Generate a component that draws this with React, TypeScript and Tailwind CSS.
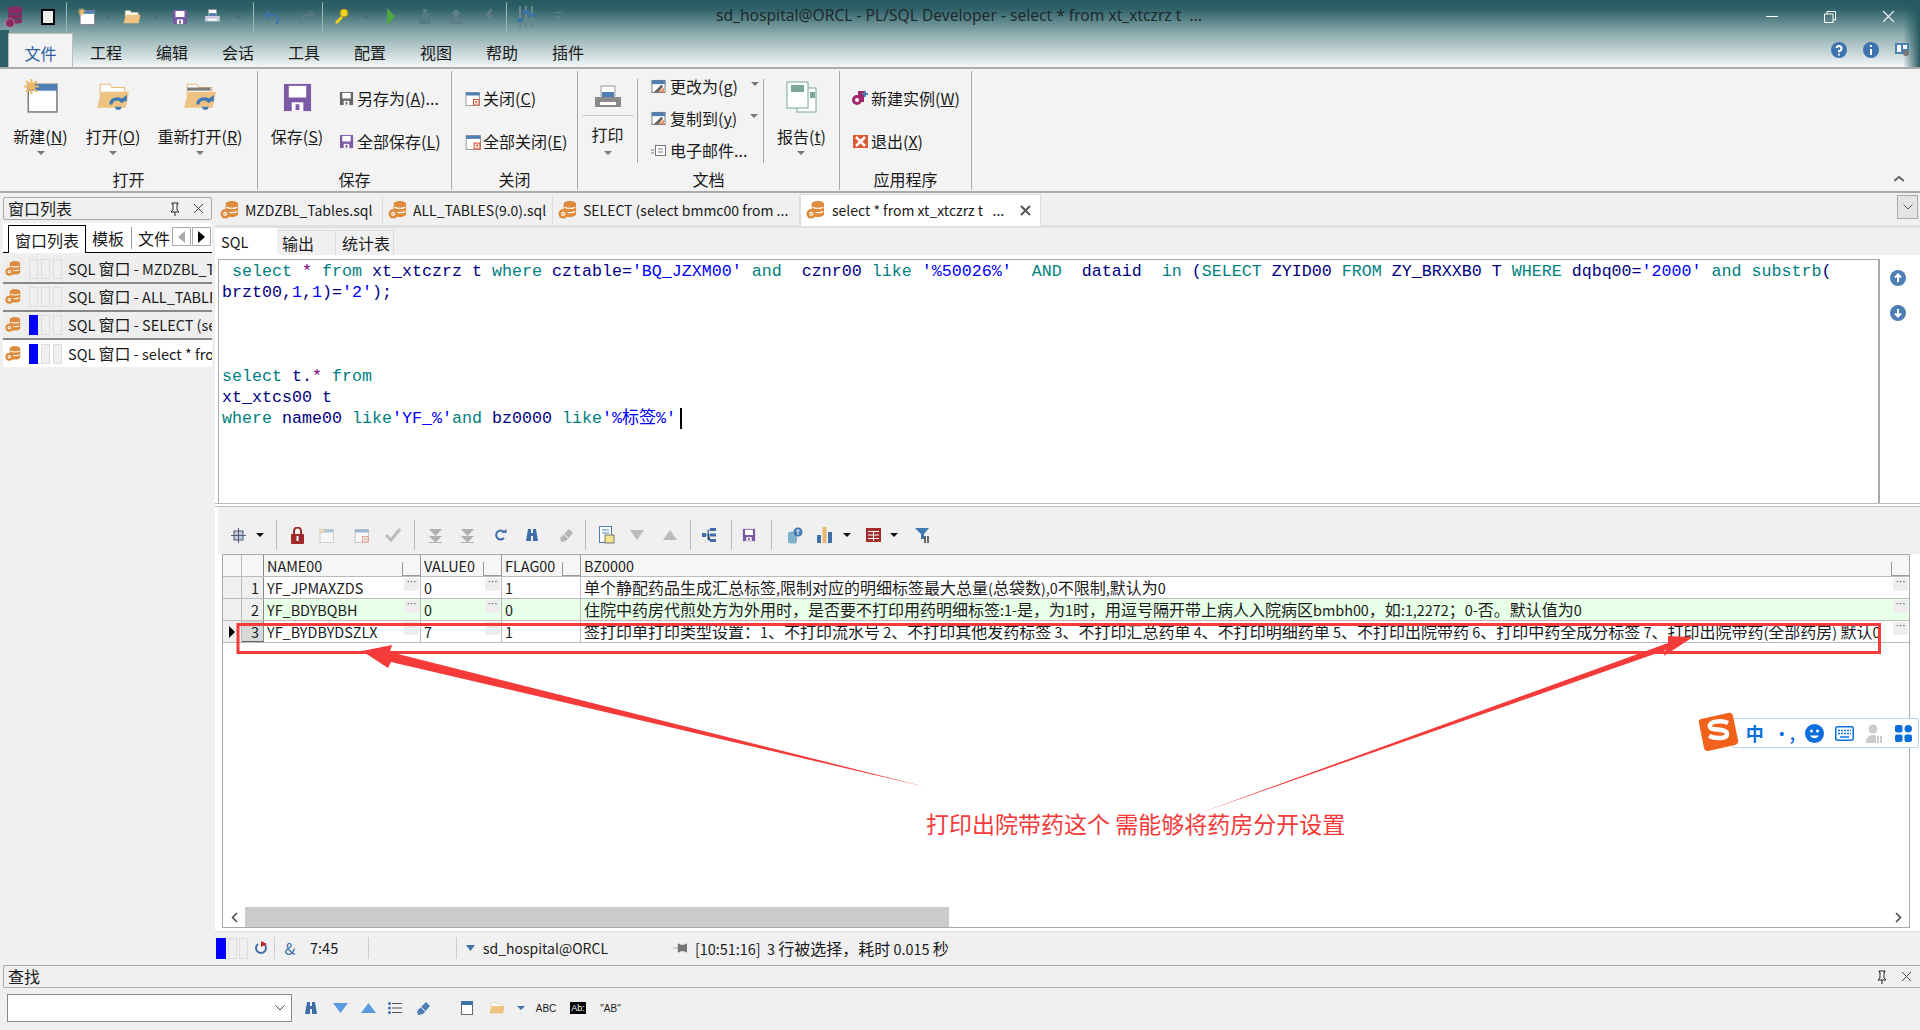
import React from "react";

const Mix = ({ t, s = "text-[14px]" }: { t: string; s?: string }) => (
  <>
    {t.split(/([\x20-\x7e]+)/).map((p, i) =>
      i % 2 === 1 ? <span key={i} className={s}>{p}</span> : <React.Fragment key={i}>{p}</React.Fragment>
    )}
  </>
);

const Db = ({ s = 18 }: { s?: number }) => (
  <svg width={s} height={s} viewBox="0 0 20 20" className="shrink-0">
    <path d="M6 3c0-1.600 3-3 6.500-3S19 1.400 19 3v11c0 1.600-3 3-6.500 3S6 15.600 6 14z" fill="#dd8c3e" />
    <path d="M7 6.500c2 1.500 9 1.500 11 0M7 11c2 1.500 9 1.500 11 0" stroke="#fff" strokeWidth="1.300" fill="none" />
    <circle cx="5.500" cy="13.500" r="5" fill="#dd8c3e" />
    <circle cx="5.500" cy="13.500" r="2.200" fill="#fff" />
    <circle cx="5.500" cy="13.500" r="1" fill="#dd8c3e" />
  </svg>
);
const Win = ({ s = 16, star = false, x = false }: { s?: number; star?: boolean; x?: boolean }) => (
  <svg width={s} height={s} viewBox="0 0 32 32">
    <rect x="4" y="5" width="27" height="26" fill="#fff" stroke="#808080" strokeWidth="1.500" />
    <rect x="4" y="5" width="27" height="6" fill="#4d7fb5" />
    {star && <path d="M7 0v14M0 7h14M2 2l10 10M12 2L2 12" stroke="#efb867" strokeWidth="2" />}
    {x && <rect x="19" y="19" width="11" height="11" fill="#fff" stroke="#d4502c" strokeWidth="2" />}
    {x && <path d="M22 22l5 5M27 22l-5 5" stroke="#d4502c" strokeWidth="2" />}
  </svg>
);
const Folder = ({ s = 32, arrow = true, gray = false }: { s?: number; arrow?: boolean; gray?: boolean }) => (
  <svg width={s} height={s} viewBox="0 0 32 32">
    <path d="M4 8V5h9l2 3h12v8H4z" fill="#fff" stroke="#e8bd78" />
    {gray && <rect x="4" y="8" width="22" height="3" fill="#808080" />}
    <path d="M1 27l4-15h26l-3 15z" fill="#eec382" />
    {arrow && <path d="M14 24c0-6 9-7 11-2" stroke="#3f7ab5" strokeWidth="3" fill="none" />}
    {arrow && <path d="M21 21h8v-6zM18 26a3 3 0 0 0 6 0z" fill="#3f7ab5" />}
  </svg>
);
const Save = ({ s = 16, c = "#7c5aa6" }: { s?: number; c?: string }) => (
  <svg width={s} height={s} viewBox="0 0 16 16">
    <path d="M1 1h14v14H1z" fill={c} />
    <rect x="3.500" y="2" width="9" height="6" fill="#fff" />
    <rect x="5" y="10.500" width="6" height="4.500" fill="#fff" />
    <rect x="7" y="11.500" width="2" height="3" fill={c} />
  </svg>
);
const Printer = ({ s = 30, light = false }: { s?: number; light?: boolean }) => (
  <svg width={s} height={s} viewBox="0 0 30 30">
    <rect x="8" y="3" width="14" height="10" fill="#fff" stroke="#999" />
    <rect x="9" y="9" width="12" height="5" fill="#4d7fb5" />
    <path d="M3 14h24a1 1 0 0 1 1 1v9H2v-9a1 1 0 0 1 1-1z" fill={light ? "#ccd" : "#8a8a8a"} />
    <rect x="7" y="19" width="16" height="3" fill="#fff" />
  </svg>
);
const Tri = ({ c = "#777", up = false, w = 8, h = 4 }: { c?: string; up?: boolean; w?: number; h?: number }) => (
  <svg width={w} height={h} viewBox="0 0 8 4" preserveAspectRatio="none">
    <path d={up ? "M0 4L4 0l4 4z" : "M0 0h8L4 4z"} fill={c} />
  </svg>
);
const SmallChart = ({ s = 15 }: { s?: number }) => (
  <svg width={s} height={s} viewBox="0 0 16 16">
    <rect x="1" y="1.500" width="14" height="13" fill="#fff" stroke="#777" />
    <rect x="1" y="1.500" width="14" height="4" fill="#4d7fb5" />
    <path d="M3 14l8-8 2 2-5 6z" fill="#666" />
    <path d="M8 14h6v-5z" fill="#e0703a" opacity=".8" />
  </svg>
);
const Binoc = ({ s = 14, c = "#3f6ea8" }: { s?: number; c?: string }) => (
  <svg width={s} height={s} viewBox="0 0 14 14">
    <path d="M3 1h3v4h2V1h3l2 12H8V8H6v5H1z" fill={c} />
  </svg>
);
const Eraser = ({ s = 15, c = "#b5b5b5" }: { s?: number; c?: string }) => (
  <svg width={s} height={s} viewBox="0 0 15 15">
    <path d="M10 1l4 4-7 8-5 1-1-4z" fill={c} />
    <path d="M5 6l4 4" stroke="#fff" />
  </svg>
);
const Pin = () => (
  <svg width="12" height="14" viewBox="0 0 12 14">
    <path d="M3 1h6v1H8v6l2 2H2l2-2V2H3zM6 10v4" stroke="#222" strokeWidth="1" fill="#fff" />
  </svg>
);
const XIcon = ({ s = 11, c = "#444", sw = 1 }: { s?: number; c?: string; sw?: number }) => (
  <svg width={s} height={s} viewBox="0 0 11 11">
    <path d="M1 1l9 9M10 1l-9 9" stroke={c} strokeWidth={sw} />
  </svg>
);
const DoubleDown = () => (
  <svg width="15" height="15" viewBox="0 0 15 15">
    <path d="M1 1h13L7.500 8zM1 8h13l-6.500 6.500zM1 14h13v1H1z" fill="#b0b0b0" />
  </svg>
);
const Circ = ({ d, c = "#4d7fb5", s = 16 }: { d: string; c?: string; s?: number }) => (
  <svg width={s} height={s} viewBox="0 0 16 16">
    <circle cx="8" cy="8" r="8" fill={c} />
    <path d={d} stroke="#fff" strokeWidth="2" fill="none" />
  </svg>
);

const Sep = ({ h = "h-[30px]", c = "bg-[#9fb3b5]" }: { h?: string; c?: string }) => <span className={`w-px shrink-0 ${h} ${c}`} />;

const TBtn = ({ label, u, tail }: { label: string; u: string; tail?: string }) => (
  <span className="leading-[20px] whitespace-nowrap">
    {label}(<u>{u}</u>){tail}
  </span>
);

const Big = ({ w, icon, label, u, arrow = true }: { w: string; icon: React.ReactNode; label: string; u: string; arrow?: boolean }) => (
  <div className={`flex flex-col items-center shrink-0 ${w}`}>
    <div className="h-[45px] pb-[3px] flex items-end justify-center">{icon}</div>
    <div className="mt-[8px] h-[20px]"><TBtn label={label} u={u} /></div>
    <div className="mt-[7px] h-[6px]">{arrow && <Tri />}</div>
  </div>
);
const Small = ({ icon, label, u, tail }: { icon: React.ReactNode; label: string; u: string; tail?: string }) => (
  <div className="flex items-center h-[20px] gap-[2px]">
    <span className="w-[18px] flex justify-center">{icon}</span>
    <TBtn label={label} u={u} tail={tail} />
  </div>
);
const Group = ({ w, label, children }: { w: string; label: string; children: React.ReactNode }) => (
  <div className={`${w} shrink-0 h-[119px] mt-[2px] border-r border-[#aaa] flex flex-col`}>
    <div className="h-[98px] flex">{children}</div>
    <div className="h-[21px] leading-[20px] text-center">{label}</div>
  </div>
);

const K = ({ children }: { children: React.ReactNode }) => <span className="text-[#008080]">{children}</span>;
const N = ({ children }: { children: React.ReactNode }) => <span className="text-[#000080]">{children}</span>;
const S = ({ children }: { children: React.ReactNode }) => <span className="text-[#0000ff]">{children}</span>;
const P = ({ children }: { children: React.ReactNode }) => <span className="text-[#800080]">{children}</span>;

const Dots = () => (
  <span className="absolute right-[1px] top-[1px] w-[15px] h-[13px] bg-[#eeeeee] text-[10px] leading-[7px] text-center text-[#333] font-['Liberation_Sans',sans-serif]">···</span>
);

const GS = "text-[14.4px]";
const Row = ({ n, name, v, f, bz, bg = "bg-white", active = false }: { n: string; name: string; v: string; f: string; bz: string; bg?: string; active?: boolean }) => (
  <div className={`flex h-[22px] border-b border-[#bbb] leading-[21px] ${bg}`}>
    <div className="w-[19px] shrink-0 bg-[#f0f0f0] border-r border-[#bbb] flex items-center justify-center">
      {active && <span className="w-0 h-0 border-y-[6px] border-y-transparent border-l-[6px] border-l-black" />}
    </div>
    <div className={`w-[22px] shrink-0 text-right pr-[4px] border-r border-[#888] ${active ? "bg-[#d8d8d8] border-b border-b-[#666]" : "bg-[#f0f0f0]"}`}><Mix t={n} s={GS} /></div>
    <div className="w-[157px] shrink-0 pl-[3px] border-r border-[#bbb] relative"><Mix t={name} s={GS} /><Dots /></div>
    <div className="w-[81px] shrink-0 pl-[3px] border-r border-[#bbb] relative"><Mix t={v} s={GS} /><Dots /></div>
    <div className="w-[79px] shrink-0 pl-[3px] border-r border-[#bbb]"><Mix t={f} s={GS} /></div>
    <div className="flex-1 min-w-0 pl-[3px] relative pr-[20px]">
      <div className="overflow-hidden whitespace-nowrap"><Mix t={bz} s={GS} /></div>
      <Dots />
    </div>
  </div>
);
const Head = ({ w, label }: { w: string; label: string }) => (
  <div className={`${w} shrink-0 pl-[3px] border-r border-[#999] relative`}>
    <Mix t={label} s={GS} />
    <span className="absolute right-0 bottom-0 w-[18px] h-[14px] border-b border-l border-[#999]" />
  </div>
);

const SideRow = ({ t, bars, active = false }: { t: string; bars: number; active?: boolean }) => (
  <div className={`flex items-center overflow-hidden whitespace-nowrap ${active ? "bg-white h-[27px]" : "bg-[#eeeeee] h-[28px] border-b-2 border-[#888]"}`}>
    <span className="w-[26px] shrink-0 pl-[2px] flex justify-start"><Db s={16} /></span>
    <span className="flex gap-[3px] mr-[6px] shrink-0">
      <span className={`w-[9px] h-[20px] border ${bars >= 1 ? "bg-[#0000ff] border-[#0000ff]" : "bg-[#efefef] border-[#ddd]"}`} />
      <span className="w-[9px] h-[20px] border border-[#ddd] bg-[#efefef]" />
      <span className="w-[9px] h-[20px] border border-[#ddd] bg-[#efefef]" />
    </span>
    <span className="-mt-[2px]"><Mix t={t} s="text-[14.5px]" /></span>
  </div>
);

export default function App() {
  return (
    <div className="relative w-[1920px] h-[1030px] overflow-hidden bg-[#f0f0f0] text-[16px] text-[#1a1a1a] font-['Noto_Sans_CJK_SC','Noto_Sans',sans-serif] flex flex-col">
      {/* Header */}
      <div className="relative h-[67px] shrink-0 bg-[linear-gradient(to_bottom,#255a60_0%,#2c5f66_12%,#87a8ab_48%,#dfe8e8_90%,#f3f6f6_100%)]">
        <div className="absolute left-0 top-[30px] bottom-0 w-[9px] bg-[#2a5f65]" />
        <div className="absolute right-0 top-0 bottom-0 w-[17px] bg-[linear-gradient(to_right,transparent,#25595f)]" />
        <div className="relative h-[33px] flex items-center">
          <span className="w-[30px] flex justify-center">
            <svg width="20" height="24" viewBox="0 0 20 24">
              <path d="M3 3c0-2 14-2 14 0v14c0 2-14 2-14 0z" fill="#8a2a63" />
              <path d="M3 8c2 2 12 2 14 0M3 13c2 2 12 2 14 0" stroke="#2a5f65" fill="none" />
              <circle cx="5" cy="18" r="4.500" fill="#8a2a63" stroke="#d9b" strokeWidth=".6" />
            </svg>
          </span>
          <span className="w-[36px] flex justify-center"><span className="w-[14px] h-[16px] bg-[#eee] border-2 border-black block" /></span>
          <Sep />
          <span className="w-[38px] flex justify-center"><Win s={17} star /></span>
          <span className="w-[6px] flex justify-center"><Tri c="#4e6c70" /></span>
          <span className="w-[42px] flex justify-center"><Folder s={18} arrow={false} /></span>
          <span className="w-[6px] flex justify-center"><Tri c="#4e6c70" /></span>
          <span className="w-[42px] flex justify-center"><Save s={16} /></span>
          <span className="w-[22px] flex justify-center"><Printer s={17} light /></span>
          <span className="w-[30px] flex justify-center"><Tri c="#4e6c70" /></span>
          <Sep />
          <span className="w-[36px] flex justify-center">
            <svg width="16" height="16" viewBox="0 0 16 16"><path d="M5 2L1 6l4 4M1 6h8a5 5 0 0 1 3 9" stroke="#3f72a8" strokeWidth="2" fill="none" /></svg>
          </span>
          <span className="w-[32px] flex justify-center">
            <svg width="16" height="16" viewBox="0 0 16 16"><path d="M11 2l4 4-4 4M15 6H7a5 5 0 0 0-3 8" stroke="#5a7b80" strokeWidth="2" fill="none" /></svg>
          </span>
          <Sep />
          <span className="w-[37px] flex justify-center">
            <svg width="15" height="17" viewBox="0 0 15 17"><circle cx="10" cy="5" r="4" fill="#f0d020" stroke="#a09010" /><path d="M7 8l-6 6 2 2 6-6" fill="#f0d020" /></svg>
          </span>
          <span className="w-[12px] flex justify-center"><Tri c="#4e6c70" /></span>
          <span className="w-[38px] flex justify-center">
            <svg width="10" height="17" viewBox="0 0 10 17"><path d="M1 0l8 8.500L1 17z" fill="#4fa83f" /></svg>
          </span>
          <span className="w-[30px] flex justify-center"><svg width="14" height="16" viewBox="0 0 14 16"><path d="M5 0h4v5h3l-5 5-5-5h3zM1 9v6h12V9z" fill="#557a80" /></svg></span>
          <span className="w-[32px] flex justify-center"><svg width="14" height="16" viewBox="0 0 14 16"><path d="M7 0l5 5H9v5H5V5H2zM1 9v6h12V9z" fill="#5d7f85" /></svg></span>
          <span className="w-[34px] flex justify-center"><svg width="14" height="16" viewBox="0 0 14 16"><path d="M8 0L3 7h3L4 16l7-10H8l2-6z" fill="#5d7f85" /></svg></span>
          <Sep />
          <span className="w-[38px] flex justify-center">
            <svg width="18" height="22" viewBox="0 0 18 22"><path d="M3 0v22M9 0v22M15 0v22" stroke="#6a878b" strokeWidth="2" /><path d="M0 12h6v4H0zM6 4h6v4H6zM12 7h6v4h-6z" fill="#3f72a8" /></svg>
          </span>
          <span className="w-[26px] flex justify-center"><svg width="8" height="10" viewBox="0 0 8 10"><path d="M0 0h8v1H0zM0 4h8L4 9z" fill="#5d7f85" /></svg></span>
          <div className="absolute left-[716px] top-[4px] leading-[22px] text-[15.6px] text-[#1e2a2c] font-['Noto_Sans',sans-serif] whitespace-pre">sd_hospital@ORCL - PL/SQL Developer - select * from xt_xtczrz t  ...</div>
          <div className="absolute right-0 top-0 h-[33px] w-[178px] flex items-center text-white">
            <span className="w-[59px] flex justify-center"><span className="w-[12px] h-px bg-white" /></span>
            <span className="w-[58px] flex justify-center">
              <svg width="12" height="12" viewBox="0 0 12 12"><path d="M3 3V.5h8.500V9H9M.5 3h8.500v8.500H.5z" stroke="#fff" fill="none" /></svg>
            </span>
            <span className="w-[59px] flex justify-center"><XIcon s={13} c="#fff" /></span>
          </div>
        </div>
        <div className="relative h-[34px] flex pl-[8px]">
          <div className="w-[65px] h-[35px] bg-[#f3f3f3] border border-b-0 border-[#bbb] text-center leading-[38px] text-[#2e5f9e]">文件</div>
          {["工程", "编辑", "会话", "工具", "配置", "视图", "帮助", "插件"].map((t) => (
            <div key={t} className="w-[66px] text-center leading-[38px]">{t}</div>
          ))}
          <div className="absolute right-[9px] top-[9px] flex items-center gap-[16px]">
            <Circ c="#3f72b0" d="M5.500 6a2.500 2.500 0 1 1 2.500 3v1.500M8 12v1.500" />
            <Circ c="#3f72b0" d="M8 3v2M8 7v6" />
            <svg width="16" height="16" viewBox="0 0 16 16"><rect width="14" height="11" y="1" fill="#4d7fb5" /><path d="M2 3h4v7H2zM8 3h4v4H8z" fill="#fff" /><circle cx="11" cy="11" r="3" fill="#777" /></svg>
          </div>
        </div>
      </div>

      {/* Ribbon */}
      <div className="relative h-[126px] shrink-0 bg-[#f3f3f3] border-y-2 border-[#aaa] flex items-start">
        <Group w="w-[258px]" label="打开">
          <Big w="w-[81px]" icon={<Win s={34} star />} label="新建" u="N" />
          <Big w="w-[64px]" icon={<Folder s={34} />} label="打开" u="O" />
          <Big w="w-[110px]" icon={<Folder s={34} gray />} label="重新打开" u="R" />
        </Group>
        <Group w="w-[194px]" label="保存">
          <Big w="w-[78px]" icon={<Save s={31} />} label="保存" u="S" arrow={false} />
          <div className="pt-[17px] pl-[1px] flex flex-col gap-[23px]">
            <Small icon={<Save s={15} c="#666" />} label="另存为" u="A" tail="..." />
            <Small icon={<Save s={15} />} label="全部保存" u="L" />
          </div>
        </Group>
        <Group w="w-[126px]" label="关闭">
          <div className="pt-[17px] pl-[11px] flex flex-col gap-[23px]">
            <Small icon={<Win s={16} x />} label="关闭" u="C" />
            <Small icon={<Win s={17} x />} label="全部关闭" u="E" />
          </div>
        </Group>
        <Group w="w-[262px]" label="文档">
          <div className="w-[59px] shrink-0 flex flex-col items-center">
            <div className="h-[45px] w-[52px] flex items-end justify-center border-b border-[#ccc] pb-[2px]"><Printer s={30} /></div>
            <div className="mt-[8px] h-[20px] leading-[20px]">打印</div>
            <div className="mt-[7px]"><Tri /></div>
          </div>
          <div className="w-px h-[84px] mt-[8px] bg-[#aaa]" />
          <div className="w-[126px] pt-[5px] pl-[12px] flex flex-col gap-[12px]">
            <div className="flex items-center"><Small icon={<SmallChart />} label="更改为" u="g" /><span className="ml-[13px] -mt-[4px]"><Tri /></span></div>
            <div className="flex items-center"><Small icon={<SmallChart />} label="复制到" u="y" /><span className="ml-[13px] -mt-[4px]"><Tri /></span></div>
            <div className="flex items-center h-[20px] gap-[2px]">
              <span className="w-[18px] flex justify-center"><svg width="15" height="11" viewBox="0 0 15 11"><rect x="4.500" y=".5" width="10" height="10" fill="#fff" stroke="#777" /><path d="M0 5h3M0 8h3M7 4h5M7 7h5" stroke="#777" /></svg></span>
              <span className="whitespace-nowrap">电子邮件...</span>
            </div>
          </div>
          <div className="w-px h-[84px] mt-[8px] bg-[#aaa]" />
          <Big w="w-[75px]" icon={
            <svg width="32" height="32" viewBox="0 0 32 32"><rect x="12" y="7" width="19" height="24" fill="#fff" stroke="#7ba89a" /><rect x="2" y="1" width="21" height="26" fill="#fff" stroke="#7ba89a" /><rect x="6" y="4" width="13" height="7" fill="#7ba89a" /><rect x="25" y="11" width="5" height="6" fill="#7ba89a" /></svg>
          } label="报告" u="t" />
        </Group>
        <Group w="w-[132px]" label="应用程序">
          <div className="pt-[17px] pl-[11px] flex flex-col gap-[23px]">
            <Small icon={<svg width="16" height="16" viewBox="0 0 16 16"><path d="M6 1h6v11H6z" fill="#a0286a" /><circle cx="5" cy="10" r="5" fill="#a0286a" /><circle cx="5" cy="10" r="2" fill="#fff" /><path d="M13 1v6M10 4h6" stroke="#4d7fb5" strokeWidth="2" /></svg>} label="新建实例" u="W" />
            <Small icon={<svg width="15" height="15" viewBox="0 0 15 15"><rect width="15" height="13" y="1" fill="#dc5a32" /><path d="M3 3l9 9M12 3l-9 9" stroke="#fff" strokeWidth="2.500" /></svg>} label="退出" u="X" />
          </div>
        </Group>
        <span className="absolute right-[16px] bottom-[9px]">
          <svg width="10" height="6" viewBox="0 0 10 6"><path d="M0 5l5-4 5 4" stroke="#666" strokeWidth="2" fill="none" /></svg>
        </span>
      </div>

      {/* Main */}
      <div className="flex-1 min-h-0 flex">
        {/* Left panel */}
        <div className="w-[215px] shrink-0 pl-[3px] pr-[3px] pt-[4px]">
          <div className="h-[23px] border border-[#aaa] rounded-[2px] flex items-center pl-[4px] leading-[21px]">
            <span className="flex-1">窗口列表</span>
            <span className="w-[20px] flex justify-center"><Pin /></span>
            <span className="w-[26px] flex justify-center"><XIcon /></span>
          </div>
          <div className="mt-[3px] h-[30px] bg-white border-b border-black flex items-end relative">
            <div className="ml-[5px] w-[78px] h-[28px] border border-b-0 border-black bg-white text-center leading-[29px] -mb-px">窗口列表</div>
            <div className="w-[45px] h-[28px] pl-[6px] leading-[29px]">模板</div>
            <div className="w-px h-[22px] mb-[3px] bg-[#999]" />
            <div className="pl-[6px] h-[28px] leading-[29px]">文件</div>
            <div className="absolute right-[1px] top-[4px] flex gap-[1px]">
              <span className="w-[19px] h-[19px] border border-[#aaa] flex items-center justify-center"><span className="w-0 h-0 border-y-[6px] border-y-transparent border-r-[7px] border-r-[#aaa]" /></span>
              <span className="w-[19px] h-[19px] border border-[#aaa] flex items-center justify-center"><span className="w-0 h-0 border-y-[6px] border-y-transparent border-l-[7px] border-l-black" /></span>
            </div>
          </div>
          <div className="mt-[3px] flex flex-col">
            <SideRow t="SQL 窗口 - MZDZBL_Tables.sql" bars={0} />
            <SideRow t="SQL 窗口 - ALL_TABLES(9.0).sql" bars={0} />
            <SideRow t="SQL 窗口 - SELECT (select bmmc00" bars={1} />
            <SideRow t="SQL 窗口 - select * from xt_xtczrz" bars={1} active />
          </div>
        </div>

        {/* Right */}
        <div className="flex-1 min-w-0 flex flex-col">
          {/* doc tabs */}
          <div className="h-[35px] shrink-0 flex items-start relative border-b-[3px] border-[#e0e0e0]">
            {[
              ["w-[168px]", "MZDZBL_Tables.sql"],
              ["w-[170px]", "ALL_TABLES(9.0).sql"],
              ["w-[247px]", "SELECT (select bmmc00 from ..."],
            ].map(([w, t]) => (
              <div key={t} className={`${w} h-[28px] mt-[3px] flex items-center gap-[6px] pl-[5px] border-r border-[#ddd] whitespace-pre`}>
                <Db s={19} /><span className="text-[14px]">{t}</span>
              </div>
            ))}
            <div className="w-[241px] h-[32px] mt-[1px] bg-white border border-b-0 border-[#ddd] flex items-center pl-[5px] relative">
              <Db s={19} /><span className="ml-[7px] whitespace-pre text-[14px]">select * from xt_xtczrz t   ...</span>
              <span className="absolute right-[9px] top-[10px]"><XIcon s={11} c="#555" sw={2} /></span>
            </div>
            <span className="absolute right-[2px] top-[2px] w-[21px] h-[24px] border border-[#aaa] bg-[#e4e4e4] flex items-center justify-center">
              <svg width="10" height="6" viewBox="0 0 10 6"><path d="M.5.5L5 5 9.500.5" stroke="#555" fill="none" /></svg>
            </span>
          </div>
          {/* white pane */}
          <div className="h-[703px] shrink-0 bg-white flex flex-col">
            <div className="h-[27px] shrink-0 bg-[#f0f0f0] flex items-end">
              <div className="w-[62px] h-[27px] bg-white pl-[6px] leading-[26px]"><span className="text-[14.5px]">SQL</span></div>
              <div className="w-[58px] h-[25px] pl-[4px] border-r border-t border-[#ddd] leading-[24px] ml-px">输出</div>
              <div className="w-[58px] h-[25px] pl-[6px] border-r border-t border-[#ddd] leading-[24px]">统计表</div>
            </div>
            <div className="h-[4px] shrink-0" />
            <div className="flex h-[244px] shrink-0 pl-[3px]">
              <div className="w-[1662px] border border-[#aaa] border-r-2 border-b-0 pl-[3px] pt-px font-['Liberation_Mono','Noto_Sans_CJK_SC',monospace] text-[16.67px] leading-[21px] whitespace-pre overflow-hidden">
                <div> <K>select</K> <P>*</P> <K>from</K> <N>xt_xtczrz t</N> <K>where</K> <N>cztable</N><N>=</N><S>'BQ_JZXM00'</S> <K>and</K>  <N>cznr00</N> <K>like</K> <S>'%50026%'</S>  <K>AND</K>  <N>dataid</N>  <K>in</K> <N>(</N><K>SELECT</K> <N>ZYID00</N> <K>FROM</K> <N>ZY_BRXXB0 T</N> <K>WHERE</K> <N>dqbq00=</N><S>'2000'</S> <K>and</K> <K>substrb</K><N>(</N></div>
                <div><N>brzt00,</N><S>1</S><N>,</N><S>1</S><N>)=</N><S>'2'</S><N>);</N></div>
                <div className="h-[63px]" />
                <div><K>select</K> <N>t.</N><P>*</P> <K>from</K></div>
                <div><N>xt_xtcs00 t</N></div>
                <div className="flex"><span><K>where</K> <N>name00</N> <K>like</K><S>'YF_%'</S><K>and</K> <N>bz0000</N> <K>like</K><S>'%<span className="text-[17px]">标签</span>%'</S></span><span className="w-[2px] h-[21px] bg-black ml-[4px]" /></div>
              </div>
              <div className="flex-1 flex flex-col items-center pt-[11px] gap-[19px] pr-[5px]">
                <Circ s={16} d="M8 12V5M5 7.500L8 4.500l3 3" />
                <Circ s={16} d="M8 4v7M5 8.500l3 3 3-3" />
              </div>
            </div>
            <div className="h-[4px] shrink-0 border-y border-[#bbb]" />
            {/* grid toolbar */}
            <div className="h-[47px] shrink-0 ml-[3px] pt-[9px] bg-[#f0f0f0] flex items-center">
              <span className="w-[40px] flex justify-center">
                <svg width="15" height="15" viewBox="0 0 15 15"><rect x="3" y="3" width="9" height="9" fill="#bcd" stroke="#557" /><path d="M7.500 0v15M0 7.500h15" stroke="#557" /></svg>
              </span>
              <span className="w-[8px] -ml-[2px] mr-[12px]"><Tri c="#111" /></span>
              <Sep c="bg-[#bbb]" />
              <span className="w-[40px] flex justify-center">
                <svg width="13" height="17" viewBox="0 0 13 17"><path d="M3 7V4a3.500 3.500 0 0 1 7 0v3" stroke="#9e2a2a" strokeWidth="2" fill="none" /><rect y="7" width="13" height="10" rx="1" fill="#9e2a2a" /><rect x="5.500" y="9" width="2" height="5" fill="#fff" /></svg>
              </span>
              <span className="w-[18px] flex justify-center opacity-40"><Win s={16} star /></span>
              <span className="w-[52px] flex justify-center opacity-50"><Win s={16} x /></span>
              <span className="w-[12px] flex justify-center"><svg width="16" height="14" viewBox="0 0 16 14" className="shrink-0"><path d="M1 7l5 5 9-11" stroke="#bbb" strokeWidth="3" fill="none" /></svg></span>
              <span className="w-[15px]" />
              <Sep c="bg-[#bbb]" />
              <span className="w-[40px] flex justify-center"><DoubleDown /></span>
              <span className="w-[24px] flex justify-center"><DoubleDown /></span>
              <span className="w-[42px] flex justify-center"><svg width="13" height="13" viewBox="0 0 13 13"><path d="M10 9a4.500 4.500 0 1 1 0-6" stroke="#3f6ea8" strokeWidth="2" fill="none" /><path d="M7.500 4h5V0z" fill="#3f6ea8" /></svg></span>
              <span className="w-[22px] flex justify-center"><Binoc /></span>
              <span className="w-[4px]" />
              <span className="w-[38px] flex justify-center"><Eraser /></span>
              <Sep c="bg-[#bbb]" />
              <span className="w-[42px] flex justify-center"><svg width="16" height="18" viewBox="0 0 16 18"><rect x=".5" y=".5" width="12" height="16" fill="#fff" stroke="#4d7fb5" /><path d="M3 4h7M3 7h7" stroke="#4d7fb5" /><rect x="6" y="9" width="9" height="8" fill="#f5e48a" stroke="#777" /></svg></span>
              <span className="w-[18px] flex justify-center"><Tri c="#bbb" w={14} h={10} /></span>
              <span className="w-[4px]" />
              <span className="w-[40px] flex justify-center"><Tri c="#bbb" up w={14} h={10} /></span>
              <Sep c="bg-[#bbb]" />
              <span className="w-[36px] flex justify-center"><svg width="14" height="14" viewBox="0 0 14 14"><rect x="0" y="5" width="4" height="4" fill="#3f6ea8" /><path d="M4 7h4M6 2v10h2M6 2h2" stroke="#3f6ea8" /><rect x="8" y="0" width="6" height="3" fill="#3f6ea8" /><rect x="8" y="5.500" width="6" height="3" fill="#3f6ea8" /><rect x="8" y="11" width="6" height="3" fill="#3f6ea8" /></svg></span>
              <span className="w-[4px]" />
              <Sep c="bg-[#bbb]" />
              <span className="w-[34px] flex justify-center"><Save s={14} /></span>
              <span className="w-[5px]" />
              <Sep c="bg-[#bbb]" />
              <span className="w-[46px] flex justify-center"><svg width="16" height="17" viewBox="0 0 16 17"><path d="M1 6c0-2 9-2 9 0v9c0 2-9 2-9 0z" fill="#7fb3cc" /><circle cx="11" cy="5" r="4.500" fill="#3f7ab5" /><path d="M11 8V3M9 4.500l2-2 2 2" stroke="#fff" fill="none" /></svg></span>
              <span className="w-[12px] flex justify-center"><svg width="15" height="16" viewBox="0 0 15 16" className="shrink-0"><rect y="8" width="4" height="8" fill="#3f6ea8" /><rect x="5.500" width="4" height="16" fill="#e8b870" /><rect x="11" y="5" width="4" height="11" fill="#3f6ea8" /></svg></span>
              <span className="w-[34px] flex justify-center"><Tri c="#111" /></span>
              <span className="w-[18px] flex justify-center"><svg width="15" height="14" viewBox="0 0 15 14"><rect width="15" height="14" fill="#a52a2a" /><path d="M2 3.500h11M2 7h11M2 10.500h11M7.500 3v10" stroke="#fff" /></svg></span>
              <span className="w-[24px] flex justify-center"><Tri c="#111" /></span>
              <span className="w-[32px] flex justify-center"><svg width="15" height="15" viewBox="0 0 15 15"><path d="M0 0h14L9 6v5H6V6z" fill="#3f7ab5" /><path d="M10 8v7M13 8v7" stroke="#666" strokeWidth="2" /></svg></span>
            </div>
            {/* Grid */}
            <div className="ml-[7px] mr-[10px] h-[374px] shrink-0 border border-[#aaa] flex flex-col">
              <div className="flex h-[22px] border-b border-[#bbb] bg-[#f6f6f6] leading-[21px] shrink-0">
                <div className="w-[19px] shrink-0 border-r border-[#bbb]" />
                <div className="w-[22px] shrink-0 border-r border-[#888]" />
                <Head w="w-[157px]" label="NAME00" />
                <Head w="w-[81px]" label="VALUE0" />
                <Head w="w-[79px]" label="FLAG00" />
                <div className="flex-1 pl-[3px] relative"><Mix t="BZ0000" s={GS} /><span className="absolute right-0 bottom-0 w-[18px] h-[14px] border-b border-l border-[#999]" /></div>
              </div>
              <Row n="1" name="YF_JPMAXZDS" v="0" f="1" bz="单个静配药品生成汇总标签,限制对应的明细标签最大总量(总袋数),0不限制,默认为0" />
              <Row n="2" name="YF_BDYBQBH" v="0" f="0" bg="bg-[#e8ffe8]" bz="住院中药房代煎处方为外用时，是否要不打印用药明细标签:1-是，为1时，用逗号隔开带上病人入院病区bmbh00，如:1,2272；0-否。默认值为0" />
              <Row n="3" name="YF_BYDBYDSZLX" v="7" f="1" active bz="签打印单打印类型设置：1、不打印流水号 2、不打印其他发药标签 3、不打印汇总药单 4、不打印明细药单 5、不打印出院带药 6、打印中药全成分标签 7、打印出院带药(全部药房) 默认0" />
              <div className="flex-1" />
              <div className="h-[20px] shrink-0 flex items-center bg-white">
                <span className="w-[22px] flex justify-center"><svg width="7" height="11" viewBox="0 0 7 11"><path d="M6 1L1.500 5.500 6 10" stroke="#444" strokeWidth="1.500" fill="none" /></svg></span>
                <div className="w-[704px] h-[20px] bg-[#cbcbcb]" />
                <div className="flex-1" />
                <span className="w-[22px] flex justify-center"><svg width="7" height="11" viewBox="0 0 7 11"><path d="M1 1l4.500 4.500L1 10" stroke="#444" strokeWidth="1.500" fill="none" /></svg></span>
              </div>
            </div>
          </div>
          <div className="h-[5px] shrink-0 border-t border-[#ddd]" />
          {/* status */}
          <div className="h-[24px] shrink-0 flex items-center leading-[22px] whitespace-nowrap">
            <span className="ml-px w-[10px] h-[21px] bg-[#0000ff]" />
            <span className="ml-[2px] w-[9px] h-[21px] border border-[#ddd]" />
            <span className="ml-[2px] w-[9px] h-[21px] border border-[#ddd]" />
            <span className="w-[26px] flex justify-center">
              <svg width="12" height="14" viewBox="0 0 12 14"><path d="M3 3a5 5 0 1 0 6 0" stroke="#3f72a8" strokeWidth="2" fill="none" /><path d="M6 0l6 3-6 3z" fill="#c22" /></svg>
            </span>
            <Sep h="h-[22px]" c="bg-[#ccc]" />
            <span className="w-[30px] text-center text-[#3f72a8]">&amp;</span>
            <span className="w-[63px] pl-[5px] text-[14.5px]">7:45</span>
            <Sep h="h-[22px]" c="bg-[#ccc]" />
            <span className="w-[87px]" />
            <Sep h="h-[22px]" c="bg-[#ccc]" />
            <span className="w-[26px] flex justify-center"><Tri c="#3f72a8" w={9} h={6} /></span>
            <span className="w-[190px] text-[14px]">sd_hospital@ORCL</span>
            <span className="w-[22px]"><svg width="14" height="12" viewBox="0 0 14 12"><path d="M0 6h5M5 2h2v8H5zM7 3h5v6H7zM12 2h2v8h-2z" fill="#777" stroke="#777" strokeWidth=".5" /></svg></span>
            <span className="whitespace-pre"><Mix t="[10:51:16]  3 行被选择，耗时 0.015 秒" s="text-[14.4px]" /></span>
          </div>
        </div>
      </div>

      {/* Find */}
      <div className="h-[65px] shrink-0 pl-[3px]">
        <div className="h-[23px] border border-[#aaa] border-r-0 rounded-l-[2px] flex items-center pl-[4px] leading-[21px]">
          <span className="flex-1">查找</span>
          <span className="w-[20px] flex justify-center"><Pin /></span>
          <span className="w-[28px] flex justify-center"><XIcon /></span>
        </div>
        <div className="mt-[6px] flex items-center">
          <div className="ml-[4px] w-[285px] h-[28px] bg-white border border-[#888] flex items-center justify-end pr-[6px]">
            <svg width="10" height="6" viewBox="0 0 10 6"><path d="M.5.5L5 5 9.500.5" stroke="#444" fill="none" /></svg>
          </div>
          <span className="w-[33px] pl-[5px] flex justify-center"><Binoc /></span>
          <span className="w-[30px] flex justify-center"><Tri c="#5a9ae0" w={15} h={10} /></span>
          <span className="w-[27px] flex justify-center"><Tri c="#5a9ae0" up w={15} h={10} /></span>
          <span className="w-[26px] flex justify-center"><svg width="14" height="14" viewBox="0 0 14 14"><path d="M4 2.500h10M4 7h10M4 11.500h10" stroke="#555" /><circle cx="1.500" cy="2.500" r="1.500" fill="#3f72a8" /><circle cx="1.500" cy="7" r="1.500" fill="#3f72a8" /><circle cx="1.500" cy="11.500" r="1.500" fill="#3f72a8" /></svg></span>
          <span className="w-[30px] flex justify-center"><Eraser c="#4d7fb5" /></span>
          <span className="w-[43px] pl-[15px] flex justify-center"><svg width="12" height="14" viewBox="0 0 12 14"><rect x=".5" y=".5" width="11" height="13" fill="#fff" stroke="#666" /><rect width="12" height="4" fill="#3f72a8" /></svg></span>
          <span className="w-[31px] flex justify-center"><Folder s={16} arrow={false} /></span>
          <span className="w-[18px] flex justify-center"><Tri c="#3f72a8" /></span>
          <span className="w-[32px] text-center text-[10px] font-['Liberation_Sans',sans-serif]">ABC</span>
          <span className="w-[32px] flex justify-center"><span className="bg-black text-white text-[9px] leading-[12px] font-['Liberation_Sans',sans-serif] px-px">Ab:</span></span>
          <span className="w-[33px] text-center text-[10px] font-['Liberation_Sans',sans-serif]">"AB"</span>
        </div>
      </div>

      {/* Sogou IME bar */}
      <div className="absolute left-[1732px] top-[718px] w-[187px] h-[30px] bg-white border border-[#bcd0e8] rounded-[2px] flex items-center pl-[8px] text-[#0a6fdc]">
        <span className="w-[28px] text-center text-[18px] font-bold leading-[28px]">中</span>
        <span className="w-[32px] text-center text-[16px] font-bold leading-[20px]">•,</span>
        <span className="w-[30px] flex justify-center">
          <svg width="19" height="19" viewBox="0 0 19 19"><circle cx="9.500" cy="9.500" r="9.500" fill="#0a6fdc" /><circle cx="6.500" cy="7" r="1.500" fill="#fff" /><circle cx="12.500" cy="7" r="1.500" fill="#fff" /><path d="M5 11.500c2 3.500 7 3.500 9 0z" fill="#fff" /></svg>
        </span>
        <span className="w-[30px] flex justify-center">
          <svg width="19" height="15" viewBox="0 0 19 15"><rect x=".75" y=".75" width="17.500" height="13.500" rx="2" fill="#fff" stroke="#0a6fdc" strokeWidth="1.500" /><path d="M3 4.500h13M3 7.500h13" stroke="#0a6fdc" strokeWidth="1.500" strokeDasharray="2 1" /><path d="M5 11h9" stroke="#0a6fdc" strokeWidth="1.500" /></svg>
        </span>
        <span className="w-[30px] flex justify-center">
          <svg width="18" height="19" viewBox="0 0 18 19"><circle cx="8" cy="5" r="4.500" fill="#ccc" /><path d="M1 19c0-7 4-8 7-8 2 0 3 .5 3 .5V19z" fill="#ccc" /><path d="M13 12v7M16 12v7" stroke="#bbb" strokeWidth="1.500" /></svg>
        </span>
        <span className="w-[30px] flex justify-center">
          <svg width="17" height="17" viewBox="0 0 17 17"><rect width="7.500" height="7.500" rx="2" fill="#0a6fdc" /><rect x="9.500" width="7.500" height="7.500" rx="3.700" fill="#0a6fdc" /><rect y="9.500" width="7.500" height="7.500" rx="2" fill="#0a6fdc" /><rect x="9.500" y="9.500" width="7.500" height="7.500" rx="2" fill="#0a6fdc" /></svg>
        </span>
      </div>
      <svg className="absolute left-[1698px] top-[712px]" width="42" height="40" viewBox="0 0 42 40">
        <path d="M3 7L30 1q4-1 5 3l5 24q1 4-3 5L10 39q-3 .5-4-3L1 11q-1-3 2-4z" fill="#f0621a" />
        <path d="M30 11c-6-3-20-2-18 4 1 4 17 1 17 7 0 5-12 5-18 2" stroke="#fff" strokeWidth="4.500" fill="none" />
      </svg>

      {/* Annotations */}
      <svg className="absolute left-0 top-0 pointer-events-none" width="1920" height="1030" viewBox="0 0 1920 1030">
        <rect x="238" y="624.500" width="1641.500" height="28" fill="none" stroke="#f53a3a" strokeWidth="3" />
        <path d="M926 787L391 662 388 668 362 651 392 645 390 652z" fill="#f53a3a" />
        <path d="M1200 813L1666 650 1664 656 1693 637 1668 636 1668 643z" fill="#f53a3a" />
      </svg>
      <div className="absolute left-[926px] top-[807px] text-[23px] leading-[32px] text-[#f53a3a] whitespace-pre">打印出院带药这个 需能够将药房分开设置</div>
    </div>
  );
}
